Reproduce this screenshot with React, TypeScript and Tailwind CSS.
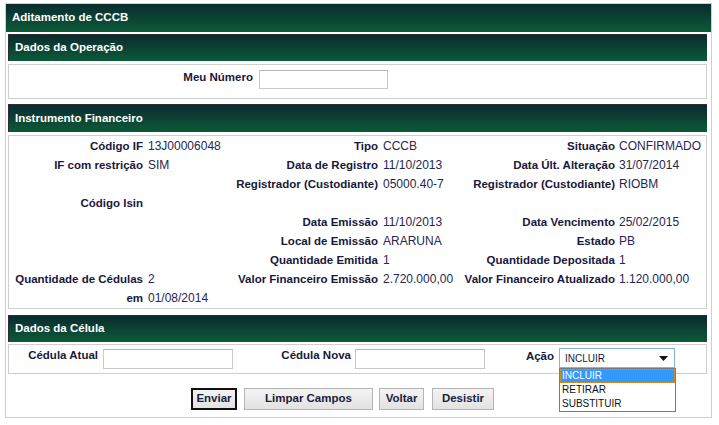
import React from 'react';

const rows: string[][] = [
  ['Código IF', '13J00006048', 'Tipo', 'CCCB', 'Situação', 'CONFIRMADO'],
  ['IF com restrição', 'SIM', 'Data de Registro', '11/10/2013', 'Data Últ. Alteração', '31/07/2014'],
  ['', '', 'Registrador (Custodiante)', '05000.40-7', 'Registrador (Custodiante)', 'RIOBM'],
  ['Código Isin', '', '', '', '', ''],
  ['', '', 'Data Emissão', '11/10/2013', 'Data Vencimento', '25/02/2015'],
  ['', '', 'Local de Emissão', 'ARARUNA', 'Estado', 'PB'],
  ['', '', 'Quantidade Emitida', '1', 'Quantidade Depositada', '1'],
  ['Quantidade de Cédulas', '2', 'Valor Financeiro Emissão', '2.720.000,00', 'Valor Financeiro Atualizado', '1.120.000,00'],
  ['em', '01/08/2014', '', '', '', ''],
];

function SectionHeader({ title, className = '' }: { title: string; className?: string }) {
  return (
    <div
      className={`flex items-center border-t border-l border-[#2e2e2e] bg-linear-to-b from-[#0a2b2e] to-[#0b5b37] pl-[6px] text-[11.5px] font-bold text-white ${className}`}
    >
      {title}
    </div>
  );
}

function Label({ children, className = '' }: { children: React.ReactNode; className?: string }) {
  return <div className={`text-right text-[11.5px] font-bold text-[#18183c] ${className}`}>{children}</div>;
}

function TextInput({ className = '' }: { className?: string }) {
  return <div className={`border border-[#c9c9c9] border-t-[#b5b5b5] bg-white ${className}`} />;
}

function Button({ label, width, primary }: { label: string; width: string; primary?: boolean }) {
  return (
    <div
      className={`flex h-[22px] items-center justify-center bg-linear-to-b from-[#f3f3f3] to-[#e2e2e2] text-[11.5px] font-bold text-[#1c1c3c] ${width} ${
        primary ? 'border-2 border-[#111]' : 'border border-[#b4b4b4]'
      }`}
    >
      {label}
    </div>
  );
}

export default function App() {
  return (
    <div className="min-h-screen bg-white pt-[3px] pl-[5px]" style={{ fontFamily: '"Liberation Sans", Arial, sans-serif' }}>
      <div className="flex h-[415px] w-[707px] flex-col border border-[#cfcfcf]">
        <div className="flex h-[28px] items-center bg-linear-to-b from-[#0a2b2e] to-[#0b5b37] pl-[6px] text-[11.5px] font-bold text-white">
          Aditamento de CCCB
        </div>

        <div className="mt-[2px] ml-[2px] mr-[4px]">
          <SectionHeader title="Dados da Operação" className="h-[27px]" />
          <div className="mt-[3px] flex h-[35px] items-start border border-[#cfcfcf]">
            <Label className="mt-[4px] w-[244px]">Meu Número</Label>
            <TextInput className="mt-[5px] ml-[6px] h-[19px] w-[129px]" />
          </div>

          <SectionHeader title="Instrumento Financeiro" className="mt-[5px] h-[28px]" />
          <div className="mt-[3px] h-[174px] border border-[#cfcfcf] pt-[1px]">
            <div className="grid grid-cols-[137px_87px_148px_81px_156px_1fr]">
              {rows.map((r, i) => (
                <React.Fragment key={i}>
                  <Label className="h-[19px] pr-[3px] leading-[19px]">{r[0]}</Label>
                  <div className="h-[19px] pl-[2px] text-[12px] leading-[19px] text-[#262650]">{r[1]}</div>
                  <Label className="h-[19px] pr-[3px] leading-[19px]">{r[2]}</Label>
                  <div className="h-[19px] pl-[2px] text-[12px] leading-[19px] text-[#262650]">{r[3]}</div>
                  <Label className="h-[19px] pr-[3px] leading-[19px]">{r[4]}</Label>
                  <div className="h-[19px] pl-[1px] text-[12px] leading-[19px] text-[#262650]">{r[5]}</div>
                </React.Fragment>
              ))}
            </div>
          </div>

          <SectionHeader title="Dados da Célula" className="mt-[6px] h-[27px]" />
          <div className="relative mt-[2px] flex h-[30px] items-start border border-[#cfcfcf]">
            <Label className="mt-[2px] w-[89px]">Cédula Atual</Label>
            <TextInput className="mt-[4px] ml-[5px] h-[20px] w-[130px]" />
            <Label className="mt-[2px] w-[118px]">Cédula Nova</Label>
            <TextInput className="mt-[4px] ml-[4px] h-[20px] w-[130px]" />
            <Label className="mt-[3px] w-[69px]">Ação</Label>
            <div className="mt-[3px] ml-[5px] flex h-[20px] w-[116px] items-center justify-between border border-[#88b4dc] bg-white pr-[6px] pl-[5px] text-[10px] text-[#16163a]">
              <span>INCLUIR</span>
              <svg width="9" height="5" viewBox="0 0 9 5">
                <polygon points="0,0 9,0 4.5,5" fill="#111" />
              </svg>
            </div>

            <div className="absolute top-[23px] left-[550px] z-10 w-[117px] border border-[#7a7a7a] bg-white text-[10px] text-[#111]">
              <div className="h-[14px] bg-[#3399ff] pl-[2px] leading-[14px] text-white outline-1 outline-dotted outline-offset-[-1px] outline-[#e0962a]">
                INCLUIR
              </div>
              <div className="h-[14px] pl-[2px] leading-[14px]">RETIRAR</div>
              <div className="h-[14px] pl-[2px] leading-[14px]">SUBSTITUIR</div>
            </div>
          </div>
        </div>

        <div className="mt-[14px] flex pl-[185px]">
          <Button label="Enviar" width="w-[46px]" primary />
          <div className="ml-[7px]">
            <Button label="Limpar Campos" width="w-[129px]" />
          </div>
          <div className="ml-[6px]">
            <Button label="Voltar" width="w-[45px]" />
          </div>
          <div className="ml-[8px]">
            <Button label="Desistir" width="w-[62px]" />
          </div>
        </div>
      </div>
    </div>
  );
}
